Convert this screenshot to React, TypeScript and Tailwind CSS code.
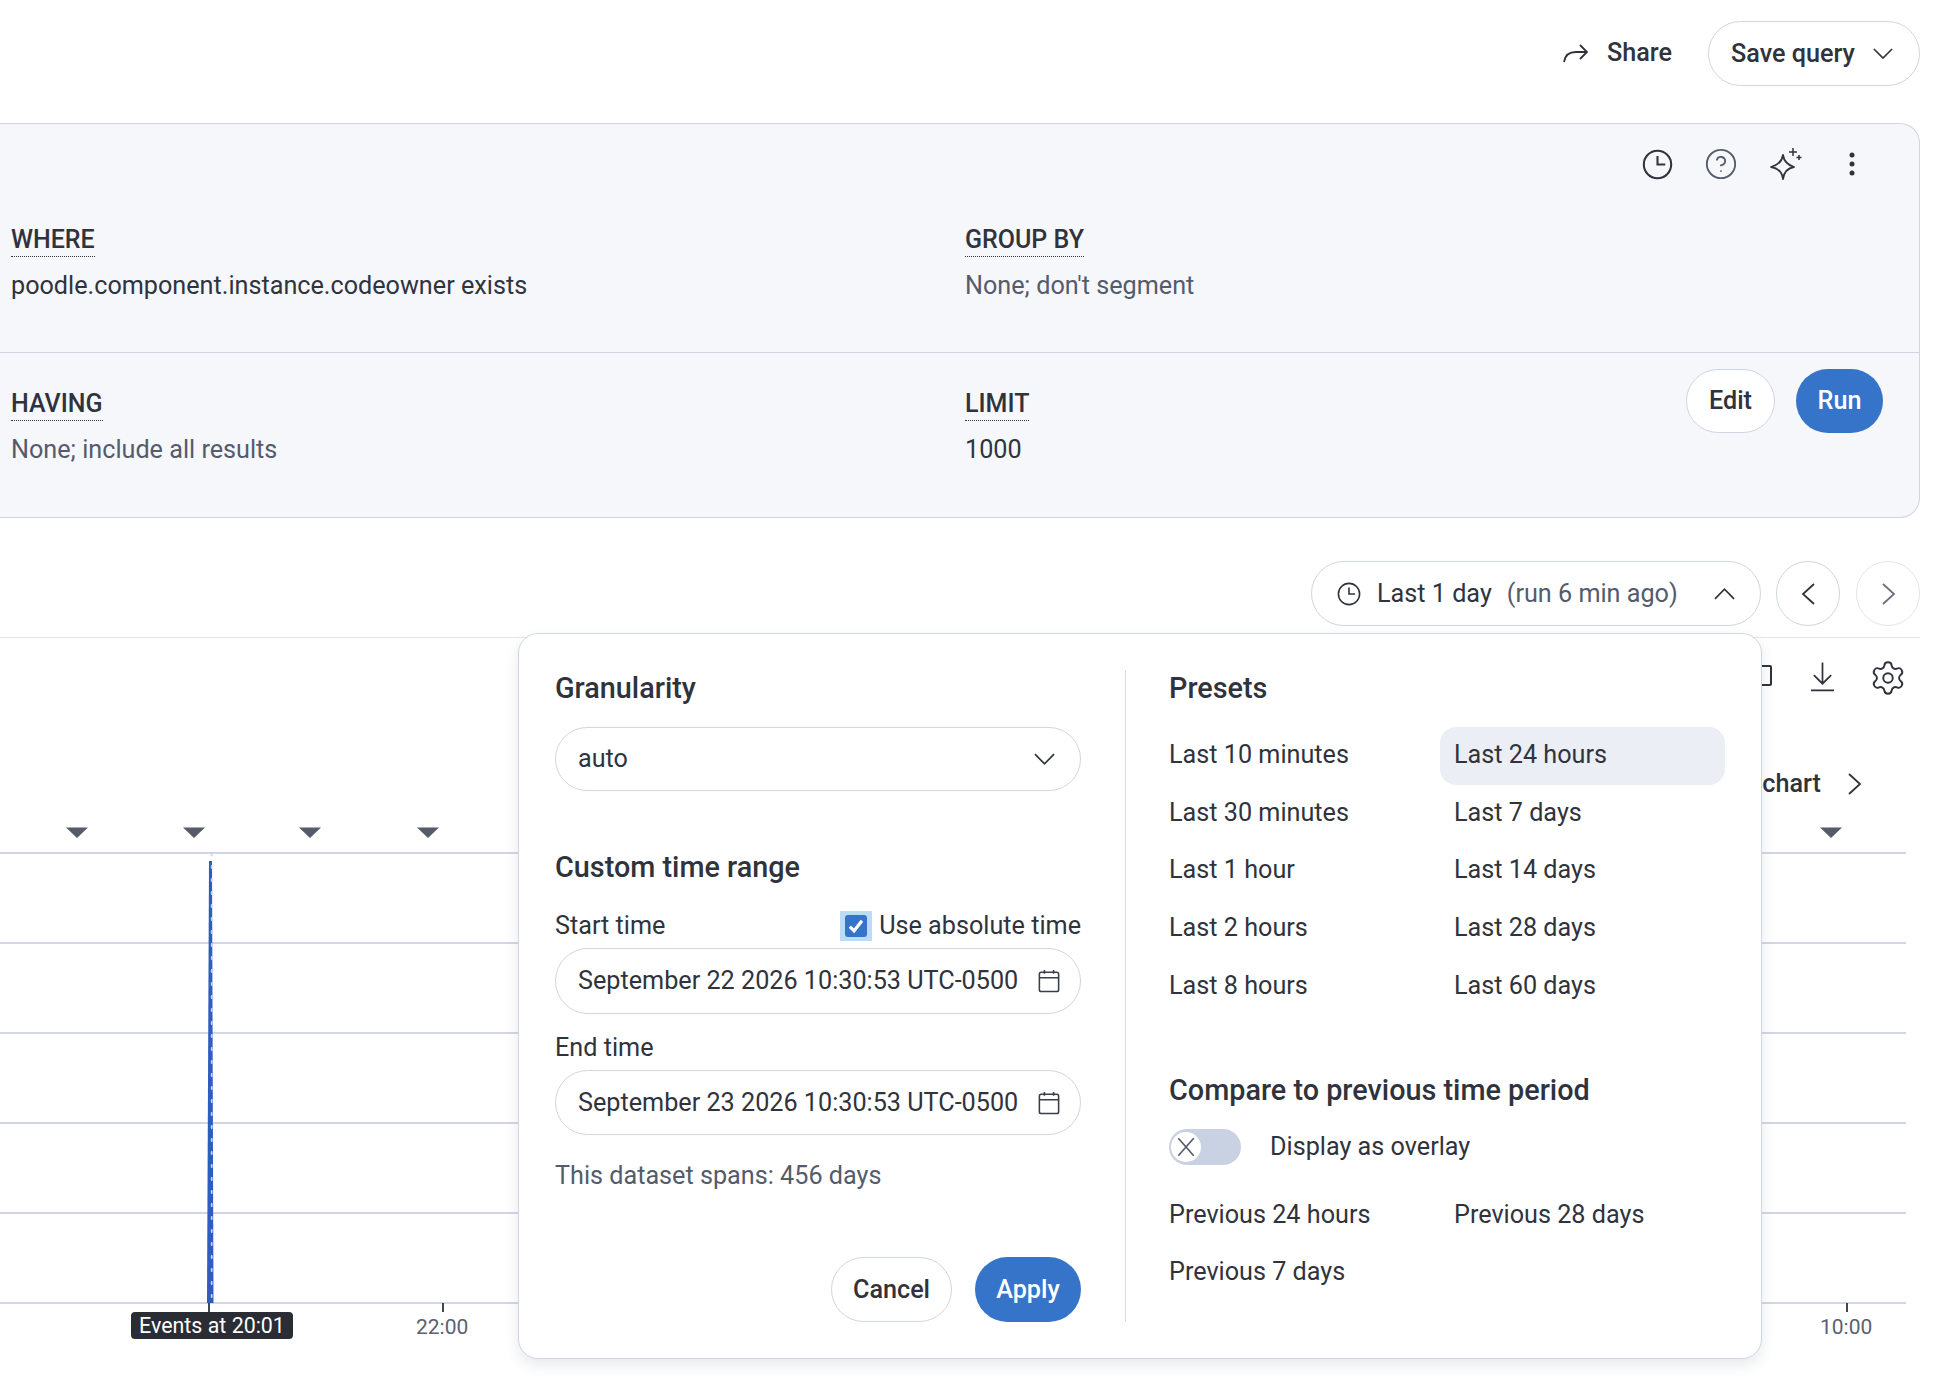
import { CircleHelp, Settings } from 'lucide-react';

const leftPresets = ['Last 10 minutes', 'Last 30 minutes', 'Last 1 hour', 'Last 2 hours', 'Last 8 hours'];
const rightPresets = ['Last 24 hours', 'Last 7 days', 'Last 14 days', 'Last 28 days', 'Last 60 days'];
const gridLines = [852, 942, 1032, 1122, 1212, 1302];
const markers = [77, 194, 310, 428, 1831];

const Chevron = ({ dir, className }: { dir: 'down' | 'up' | 'left' | 'right'; className?: string }) => {
  const paths = {
    down: 'M1 1l10 10L21 1',
    up: 'M1 11L11 1l10 10',
    left: 'M13 1L2 11l11 10',
    right: 'M1 1l11 10L1 21',
  };
  const box = dir === 'down' || dir === 'up' ? '0 0 22 12' : '0 0 14 22';
  return (
    <svg viewBox={box} fill="none" stroke="currentColor" strokeWidth="1.8" className={className}>
      <path d={paths[dir]} />
    </svg>
  );
};

const Clock = ({ className }: { className?: string }) => (
  <svg viewBox="0 0 24 24" fill="none" stroke="currentColor" strokeWidth="1.6" className={className}>
    <circle cx="12" cy="12" r="10.6" />
    <path d="M12 5.5V12h6" />
  </svg>
);

const CalendarIcon = () => (
  <svg viewBox="0 0 24 26" fill="none" stroke="#3a3e48" strokeWidth="1.7" className="w-[22px] h-[24px]">
    <rect x="1.5" y="3.5" width="21" height="21" rx="2" />
    <path d="M1.5 9.5h21M7 1v4M17 1v4" />
  </svg>
);

const Label = ({ children }: { children: string }) => (
  <div className="w-fit text-[25px] font-medium text-[#30333c] leading-[30px] border-b border-dotted border-[#30333c] pb-[1px]">{children}</div>
);

const Pill = ({ children, className }: { children: React.ReactNode; className?: string }) => (
  <div className={`flex items-center rounded-full border border-[#cfd5e3] bg-white ${className ?? ''}`}>{children}</div>
);

function TimePopover() {
  return (
    <div className="absolute left-[518px] top-[633px] w-[1244px] h-[726px] flex rounded-[20px] border border-[#cfd5e3] bg-white pt-[36px] pb-[36px] shadow-[0_6px_14px_rgba(60,70,100,0.12)]">
      <div className="w-[607px] shrink-0 h-full border-r border-[#d8dce8] pl-[36px] pr-[44px] flex flex-col">
        <div className="text-[28.8px] leading-[36px] font-medium">Granularity</div>
        <Pill className="mt-[21px] h-[64px] justify-between pl-[22px] pr-[25px]">
          <span>auto</span>
          <Chevron dir="down" className="w-[21px] h-[12px]" />
        </Pill>
        <div className="mt-[58px] text-[28.8px] leading-[36px] font-medium">Custom time range</div>
        <div className="mt-[24px] h-[34px] flex items-center justify-between">
          <span>Start time</span>
          <span className="flex items-center">
            <span className="w-[32px] h-[30px] mr-[7px] bg-[#bcdcf5] flex items-center justify-center">
              <span className="w-[22px] h-[22px] rounded-[3px] bg-[#3574c9] flex items-center justify-center">
                <svg viewBox="0 0 16 16" fill="none" stroke="white" strokeWidth="2.8" className="w-[18px] h-[18px]">
                  <path d="M2.5 8.5l3.8 3.8 7-9" />
                </svg>
              </span>
            </span>
            Use absolute time
          </span>
        </div>
        <Pill className="mt-[5px] h-[66px] justify-between pl-[22px] pr-[20px]">
          <span>September 22 2026 10:30:53 UTC-0500</span>
          <CalendarIcon />
        </Pill>
        <div className="mt-[17px] h-[34px] flex items-center">End time</div>
        <Pill className="mt-[5px] h-[65px] justify-between pl-[22px] pr-[20px]">
          <span>September 23 2026 10:30:53 UTC-0500</span>
          <CalendarIcon />
        </Pill>
        <div className="mt-[24px] h-[34px] flex items-center text-[#545b6b]">This dataset spans: 456 days</div>
        <div className="mt-auto flex justify-end gap-[23px]">
          <Pill className="h-[65px] w-[121px] justify-center font-medium">Cancel</Pill>
          <div className="h-[65px] w-[106px] rounded-full bg-[#3574c9] text-white font-medium flex items-center justify-center">Apply</div>
        </div>
      </div>
      <div className="flex-1 pl-[43px] pr-[36px] flex flex-col">
        <div className="text-[28.8px] leading-[36px] font-medium">Presets</div>
        <div className="mt-[21px] grid grid-cols-[271px_285px] auto-rows-[57.7px]">
          {leftPresets.map((label, i) => (
            <div key={label} className="contents">
              <div className="flex items-center pb-[2px]">{label}</div>
              <div className={`flex items-center pb-[2px] pl-[14px] rounded-[16px] ${i === 0 ? 'bg-[#ebeef4]' : ''}`}>{rightPresets[i]}</div>
            </div>
          ))}
        </div>
        <div className="mt-[57px] text-[28.8px] leading-[36px] font-medium">Compare to previous time period</div>
        <div className="mt-[20px] flex items-center">
          <div className="w-[72px] h-[36px] rounded-full bg-[#c9d2e2] flex items-center pl-[2px]">
            <div className="w-[30px] h-[30px] rounded-full bg-white flex items-center justify-center">
              <svg viewBox="0 0 20 20" stroke="#545b6b" strokeWidth="1.5" className="w-[22px] h-[22px]">
                <path d="M3 2l14 16M17 2L3 18" />
              </svg>
            </div>
          </div>
          <span className="ml-[29px]">Display as overlay</span>
        </div>
        <div className="mt-[20px] grid grid-cols-[285px_1fr] auto-rows-[57px]">
          <div className="flex items-center">Previous 24 hours</div>
          <div className="flex items-center">Previous 28 days</div>
          <div className="flex items-center">Previous 7 days</div>
        </div>
      </div>
    </div>
  );
}

export default function App() {
  return (
    <div className="relative w-[1940px] h-[1378px] overflow-hidden bg-white font-['Roboto',sans-serif] text-[25.2px] text-[#30333c]">
      <header className="h-[123px] w-[1920px] pt-[21px] flex justify-end">
        <div className="h-[63px] flex items-center font-medium mr-[36px]">
          <svg viewBox="0 0 26 20" fill="none" stroke="#30333c" strokeWidth="1.8" className="w-[26px] h-[20px] mr-[18px]">
            <path d="M1 19c1-7 6-10 12-10h11M17 2l7 7-7 7" />
          </svg>
          Share
        </div>
        <Pill className="h-[65px] w-[212px] pl-[22px] font-medium">
          Save query
          <Chevron dir="down" className="w-[20px] h-[11px] ml-[18px]" />
        </Pill>
      </header>

      <section className="w-[1920px] h-[395px] rounded-r-[20px] border border-l-0 border-[#cfd5e3] bg-[#f5f7fb]">
        <div className="h-[229px] border-b border-[#cfd5e3] relative">
          <div className="h-[101px] flex justify-end items-start pt-[25px] pr-[64px]">
            <Clock className="w-[31px] h-[31px] mr-[31px]" />
            <CircleHelp strokeWidth={1.3} className="w-[34px] h-[34px] text-[#545b6b] -mt-[2px] mr-[32px]" />
            <svg viewBox="0 0 32 34" fill="none" stroke="#30333c" strokeWidth="1.8" className="w-[32px] h-[34px] -mt-[2px] mr-[47px]">
              <path d="M13 8c1 7 5 10 11 12-6 1-10 5-11 12-1-7-5-11-12-12 7-2 11-5 12-12z" strokeLinejoin="round" />
              <path d="M23 1v8M19 5h8M29 8v5M26.500 10.500h5" strokeWidth="1.5" />
            </svg>
            <svg viewBox="0 0 6 24" fill="#30333c" className="w-[6px] h-[24px] mt-[3px]">
              <circle cx="3" cy="3" r="2.500" />
              <circle cx="3" cy="12" r="2.500" />
              <circle cx="3" cy="21" r="2.500" />
            </svg>
          </div>
          <div className="grid grid-cols-[954px_1fr] pl-[11px]">
            <div>
              <Label>WHERE</Label>
              <div className="mt-[11px] leading-[36px]">poodle.component.instance.codeowner exists</div>
            </div>
            <div>
              <Label>GROUP BY</Label>
              <div className="mt-[11px] leading-[36px] text-[#545b6b]">None; don't segment</div>
            </div>
          </div>
        </div>
        <div className="h-[163px] pl-[11px] pt-[36px] grid grid-cols-[954px_1fr_auto]">
          <div>
            <Label>HAVING</Label>
            <div className="mt-[11px] leading-[36px] text-[#545b6b]">None; include all results</div>
          </div>
          <div>
            <Label>LIMIT</Label>
            <div className="mt-[11px] leading-[36px]">1000</div>
          </div>
          <div className="flex gap-[21px] pr-[36px] -mt-[20px] font-medium">
            <Pill className="h-[64px] w-[89px] justify-center">Edit</Pill>
            <div className="h-[64px] w-[87px] rounded-full bg-[#3574c9] text-white flex items-center justify-center">Run</div>
          </div>
        </div>
      </section>

      <div className="w-[1920px] h-[120px] pt-[43px] border-b border-[#e2e5ee] flex justify-end gap-[15px]">
        <Pill className="h-[65px] w-[450px] pl-[25px]">
          <Clock className="w-[24px] h-[24px] mr-[16px]" />
          <span>Last 1 day</span>
          <span className="ml-[15px] text-[#545b6b]">(run 6 min ago)</span>
          <Chevron dir="up" className="w-[21px] h-[12px] ml-[36px]" />
        </Pill>
        <div className="w-[64px] h-[65px] mr-[1px] rounded-full border border-[#cfd5e3] flex items-center justify-center">
          <Chevron dir="left" className="w-[14px] h-[22px]" />
        </div>
        <div className="w-[64px] h-[65px] rounded-full border border-[#e2e5ee] flex items-center justify-center pl-[2px] text-[#6a7080]">
          <Chevron dir="right" className="w-[14px] h-[22px]" />
        </div>
      </div>

      <div className="w-[1920px] pr-[13px]">
        <div className="h-[82px] pt-[24px] flex justify-end items-start">
          <div className="w-[22px] h-[21px] mt-[3px] border-2 border-[#30333c] rounded-[2px] mr-[38px]" />
          <svg viewBox="0 0 26 30" fill="none" stroke="#30333c" strokeWidth="1.8" className="w-[25px] h-[30px] mr-[34px]">
            <path d="M13 0v22M4 13l9 9 9-9M1 29h24" />
          </svg>
          <Settings strokeWidth={1.2} className="w-[38px] h-[38px] -mt-[3px]" />
        </div>
        <div className="h-[38px] mt-[45px] flex justify-end items-center pr-[45px] font-medium">
          chart
          <Chevron dir="right" className="w-[14px] h-[22px] ml-[27px]" />
        </div>
      </div>

      <svg viewBox="0 820 1920 491" className="block mt-[18px] w-[1920px] h-[491px]">
        {gridLines.map((y) => (
          <rect key={y} x="0" y={y - 1} width="1906" height="2" fill="#d2d6e4" />
        ))}
        {markers.map((x) => (
          <path key={x} d={`M${x - 11} 826.500h22l-11 10.500z`} fill="#555b69" />
        ))}
        <path d="M209 860h3l1.500 442H207z" fill="#2f5cc0" />
        <path d="M211.700 852V1302" stroke="#c5d2ee" strokeWidth="1.800" strokeDasharray="2 11" strokeLinecap="round" />
        <path d="M209 1302v9M443 1302v9M1847 1302v9" stroke="#30333c" strokeWidth="1.800" />
      </svg>

      <div className="relative h-[40px] text-[21px] text-[#5a6170]">
        <span className="absolute left-[-52px] top-0">18:00</span>
        <span className="absolute left-[131px] top-0 h-[27px] w-[162px] rounded-[4px] bg-[#2a2d33] text-white text-center text-[21.4px] leading-[28px]">Events at 20:01</span>
        <span className="absolute left-[416px] top-0">22:00</span>
        <span className="absolute left-[1820px] top-0">10:00</span>
      </div>

      <TimePopover />
    </div>
  );
}
